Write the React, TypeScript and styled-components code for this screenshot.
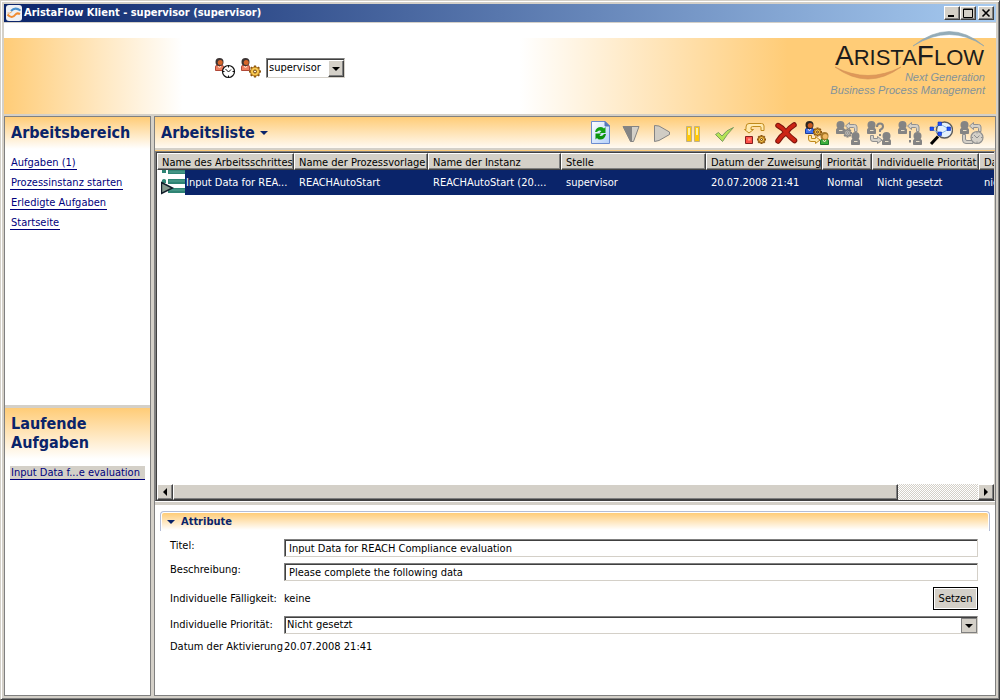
import React from "react";
import styled, { createGlobalStyle, css } from "styled-components";

const face = "#d4d0c8";
const shadow = "#808080";
const dark = "#404040";
const amber = "#ffcc77";
const navy = "#0a246a";
const ui = `"DejaVu Sans Condensed", "DejaVu Sans", sans-serif`;

const GlobalStyle = createGlobalStyle`
  * { box-sizing: border-box; }
  body { margin: 0; background: ${face}; font: 11px/14px ${ui}; color: #000; }
  button, input, select { font: inherit; color: inherit; border-radius: 0; margin: 0; padding: 0; }
  h1, h2, h3, ul { margin: 0; padding: 0; }
  svg { display: block; }
`;

const raised = css`
  background: ${face};
  border: 1px solid;
  border-color: #fff ${dark} ${dark} #fff;
  box-shadow: inset -1px -1px 0 ${shadow};
`;

const sunken = css`
  background: #fff;
  border: 1px solid;
  border-color: ${shadow} ${face} ${face} ${shadow};
  box-shadow: inset 1px 1px 0 ${dark};
`;

/* ---------- window frame ---------- */

const Window = styled.div`
  min-height: 100vh;
  display: flex;
  flex-direction: column;
  background: ${face};
  border: 1px solid;
  border-color: ${face} ${dark} ${dark} ${face};
  box-shadow: inset 1px 1px 0 #fff, inset -1px -1px 0 ${shadow};
  padding: 3px;
`;

const TitleBar = styled.header`
  height: 18px;
  display: flex;
  align-items: center;
  gap: 2px;
  padding: 0 2px;
  background: linear-gradient(90deg, ${navy}, #a6caf0);
`;

const WindowTitle = styled.h1`
  flex: 1;
  font-size: 11px;
  line-height: 18px;
  color: #fff;
`;

const WindowButtons = styled.div`
  display: flex;
`;

const WindowButton = styled.button<{ $apart?: boolean }>`
  ${raised}
  width: 16px;
  height: 14px;
  display: grid;
  place-items: center;
  margin-left: ${(p) => (p.$apart ? 2 : 0)}px;
`;

/* ---------- banner ---------- */

const Banner = styled.div`
  height: 91px;
  margin: 1px 0 2px;
  display: flex;
  align-items: flex-start;
  justify-content: space-between;
  padding: 7px 10px 0 210px;
  background: linear-gradient(90deg, ${amber} 0%, #fff 18%, #fff 52%, ${amber} 79%) no-repeat 0 15px #fff;
`;

const UserTools = styled.div`
  display: flex;
  align-items: center;
  gap: 4px;
  padding-top: 27px;
`;

const FlatButton = styled.button`
  background: none;
  border: 0;
  display: grid;
  place-items: center;
`;

const Picker = styled.div<{ $width?: string }>`
  position: relative;
  width: ${(p) => p.$width ?? "100%"};
`;

const PickerField = styled.select<{ $tall?: boolean }>`
  ${sunken}
  appearance: none;
  display: block;
  width: 100%;
  height: ${(p) => (p.$tall ? 20 : 18)}px;
  padding: 0 18px 0 2px;
  outline: 0;
`;

const PickerArrow = styled.span<{ $flat?: boolean }>`
  ${raised}
  ${(p) => p.$flat && css`border-color: ${shadow}; box-shadow: none;`}
  position: absolute;
  top: 2px;
  right: 1px;
  bottom: 1px;
  width: 16px;
  display: grid;
  place-items: center;
  pointer-events: none;
`;

/* ---------- panels ---------- */

const Workspace = styled.div`
  flex: 1;
  display: grid;
  grid-template-columns: 147px minmax(0, 1fr);
  gap: 3px;
`;

const Sidebar = styled.nav`
  display: flex;
  flex-direction: column;
  gap: 3px;
  border: 1px solid ${shadow};
`;

const SideSection = styled.section`
  flex: 1;
  background: #fff;
`;

const SideHeading = styled.h2`
  font-size: 16px;
  line-height: 19px;
  color: ${navy};
  padding: 6px 6px 7px;
  background: linear-gradient(${amber}, #fff);
`;

const LinkList = styled.ul`
  list-style: none;
  padding: 7px 5px;
`;

const LinkItem = styled.li`
  height: 20px;
`;

const SideLink = styled.a<{ $current?: boolean }>`
  display: ${(p) => (p.$current ? "block" : "inline-block")};
  line-height: 13px;
  height: 14px;
  padding: 0 1px;
  white-space: nowrap;
  color: #00007c;
  background: ${(p) => (p.$current ? face : "none")};
  text-decoration: none;
  border-bottom: 1px solid #00007c;
`;

const Main = styled.main`
  display: flex;
  flex-direction: column;
  min-width: 0;
  border: 1px solid ${shadow};
  background: #fff;
`;

const ListBar = styled.div`
  height: 31px;
  display: flex;
  align-items: center;
  justify-content: space-between;
  padding: 0 11px 0 6px;
  background: linear-gradient(${amber}, #fffaf2);
`;

const ListHeading = styled.h2`
  font-size: 16px;
  line-height: 20px;
  color: ${navy};
`;

const HeadingButton = styled.button`
  background: none;
  border: 0;
  display: flex;
  align-items: center;
  gap: 5px;
  font-weight: bold;
`;

const Toolbar = styled.div`
  display: flex;
  gap: 7px;
`;

/* ---------- work list ---------- */

const ListFrame = styled.div`
  flex: 1;
  display: flex;
  flex-direction: column;
  min-height: 200px;
  border-top: 2px solid ${face};
  box-shadow: inset 0 1px 0 ${amber};
  padding-top: 1px;
`;

const ListView = styled.div`
  flex: 1;
  display: flex;
  flex-direction: column;
  border: 1px solid;
  border-color: ${shadow} ${face} ${dark} ${shadow};
  padding: 1px 0 0 1px;
  background: linear-gradient(${dark}, ${dark}) no-repeat 0 0 / 100% 1px,
    linear-gradient(${dark}, ${dark}) no-repeat 0 0 / 1px 100%;
`;

const TableClip = styled.div`
  flex: 1;
  overflow: hidden;
`;

const Table = styled.table`
  width: 100%;
  min-width: 880px;
  table-layout: fixed;
  border-collapse: separate;
  border-spacing: 0;
`;

const Column = styled.col<{ $w?: number }>`
  width: ${(p) => (p.$w ? `${p.$w}px` : "auto")};
`;

const HeadCell = styled.th`
  ${raised}
  height: 17px;
  padding: 1px 0 0 4px;
  line-height: 13px;
  font-weight: normal;
  text-align: left;
  white-space: nowrap;
  overflow: hidden;
`;

const Cell = styled.td`
  height: 25px;
  padding: 0 0 0 5px;
  background: ${navy};
  color: #fff;
  white-space: nowrap;
  overflow: hidden;
`;

const StepCell = styled(Cell)`
  padding: 0;
`;

const Step = styled.div`
  display: flex;
  align-items: center;
  gap: 1px;
`;

const StepIcon = styled.span`
  background: #fff;
  padding-left: 4px;
`;

const ScrollBar = styled.div`
  display: flex;
  height: 16px;
  background: repeating-conic-gradient(#fff 0 25%, ${face} 0 50%) 0 0 / 2px 2px;
`;

const ScrollButton = styled.button`
  ${raised}
  width: 16px;
  display: grid;
  place-items: center;
`;

const ScrollTrack = styled.div`
  flex: 1;
  display: flex;
`;

const ScrollThumb = styled.div`
  ${raised}
  width: 90%;
`;

const Sash = styled.div`
  height: 4px;
  background: ${face};
  border-top: 1px solid #fff;
`;

/* ---------- attributes ---------- */

const Attributes = styled.section`
  min-height: 190px;
  padding: 6px 5px 0;
`;

const AttributesHeading = styled.h3`
  height: 20px;
  border: 1px solid #b4bdd6;
  border-bottom: 0;
  border-radius: 4px 4px 0 0;
  padding: 1px;
  background: linear-gradient(${amber}, #fff) content-box, #fff;
  font-size: 11px;
`;

const SectionToggle = styled(HeadingButton)`
  width: 100%;
  height: 17px;
  gap: 6px;
  padding-left: 5px;
  color: ${navy};
`;

const Form = styled.form`
  display: grid;
  grid-template-columns: 114px minmax(0, 1fr);
  row-gap: 6px;
  padding: 8px 12px 0 10px;
`;

const Label = styled.label<{ $top?: boolean }>`
  align-self: ${(p) => (p.$top ? "start" : "center")};
  line-height: 14px;
  white-space: nowrap;
`;

const TextField = styled.input`
  ${sunken}
  width: 100%;
  height: 18px;
  padding: 1px 4px 0;
  outline: 0;
`;

const Inline = styled.div`
  display: flex;
  align-items: center;
  justify-content: space-between;
`;

const PushButton = styled.button`
  width: 45px;
  height: 23px;
  background: ${face};
  border: 1px solid #000;
  box-shadow: inset 0 0 0 1px #fff;
`;

/* ---------- glyphs ---------- */

const Down = ({ size = 8, color = "#000" }: { size?: number; color?: string }) => (
  <svg width={size} height={size / 2} viewBox="0 0 8 4" fill={color}>
    <path d="M0 0H8L4 4Z" />
  </svg>
);

const Side = ({ flip = false }: { flip?: boolean }) => (
  <svg width="4" height="8" viewBox="0 0 4 8">
    <path d={flip ? "M4 0V8L0 4Z" : "M0 0V8L4 4Z"} />
  </svg>
);

const Icon = ({ children, w = 24, h = 24 }: { children: React.ReactNode; w?: number; h?: number }) => (
  <svg width={w} height={h} viewBox={`0 0 ${w} ${h}`} fill="none">
    {children}
  </svg>
);

type Tint = { body: string; edge: string; head: string; hair: string };
const orangeUser: Tint = { body: "#f08060", edge: "#b04838", head: "#d8662a", hair: "#3c3434" };
const blueUser: Tint = { body: "#3f74ee", edge: "#1a3c9c", head: "#c85a20", hair: "#2c2420" };
const greenUser: Tint = { body: "#3cae3c", edge: "#1c7a28", head: "#f0b860", hair: "#a87828" };
const greyUser: Tint = { body: "#848484", edge: "#848484", head: "#848484", hair: "#848484" };

const Person = ({ x, y, t }: { x: number; y: number; t: Tint }) => (
  <g transform={`translate(${x} ${y})`}>
    <path d="M0.500 12.500V9Q0.500 7 2.500 7H6.500Q8.500 7 8.500 9V12.500Z" fill={t.body} stroke={t.edge} />
    <circle cx="4.500" cy="4" r="4" fill={t.hair} />
    <circle cx="5.200" cy="4.400" r="2.500" fill={t.head} />
    {t === greyUser && <path d="M3 9.500H6.500" stroke="#e8dcc4" />}
    {t !== greyUser && <path d="M3 8L4.500 10L6 8" stroke="#ffe0d0" />}
  </g>
);

const Gear = ({ x, y, r = 4, grey = false }: { x: number; y: number; r?: number; grey?: boolean }) => (
  <g transform={`translate(${x} ${y})`}>
    {[0, 45, 90, 135].map((a) => (
      <path
        key={a}
        d={`M0 ${-r - 1.5}V${r + 1.5}`}
        transform={`rotate(${a})`}
        stroke={grey ? "#848484" : "#8a5410"}
        strokeWidth="2.200"
      />
    ))}
    <circle r={r} fill={grey ? "#b8b4ac" : "#f8c850"} stroke={grey ? "#848484" : "#a0640c"} />
    <circle r={r / 3} fill={grey ? "#fff" : "#fff2cc"} stroke={grey ? "#848484" : "#6c3c08"} />
  </g>
);

const Clock = ({ x, y, grey = false }: { x: number; y: number; grey?: boolean }) => (
  <g transform={`translate(${x} ${y})`} stroke={grey ? "#909090" : "#101010"}>
    <circle r="6" fill={grey ? "#d4d0c8" : "#fff"} strokeWidth="1.200" />
    <path d="M0 -5.500V-4M0 5.500V4M-5.500 0H-4M5.500 0H4M-3 -2.500L0 0.500L2.500 -2" />
  </g>
);

const BackArrow = ({ grey = false }: { grey?: boolean }) => (
  <g transform={grey ? "translate(9.500 1)" : "translate(1.500 1)"}>
    {grey ? (
      <path d="M0 4L4 0.500V2.500H9Q11.500 2.500 11.500 5V9.500H9V6.500Q9 5.500 8 5.500H4V7.500Z" fill="#d4d0c8" stroke="#909090" />
    ) : (
      <path d="M1.500 7.500V5Q1.500 1.500 4.500 1.500H17Q19.500 1.500 19.500 4V8.500H16.500V5.500Q16.500 4.500 15.500 4.500H8Q6.500 4.500 6.500 6V7.500H9L4.500 11L0 7.500Z" fill="#ffe9ae" stroke="#c08a1c" />
    )}
  </g>
);

const ForwardArrow = ({ grey = false }: { grey?: boolean }) => (
  <path
    d="M6.500 14.500V17.500H10.500V15.500L15 19L10.500 22.500V20.500H6Q3.500 20.500 3.500 18V14.500Z"
    fill={grey ? "#d4d0c8" : "#ffe9ae"}
    stroke={grey ? "#909090" : "#c08a1c"}
  />
);

const tools: { name: string; art: React.ReactNode }[] = [
  {
    name: "Aktualisieren",
    art: (
      <>
        <defs>
          <linearGradient id="page" x1="0" y1="0" x2="1" y2="1">
            <stop offset="0" stopColor="#fff" />
            <stop offset="1" stopColor="#b4d0fa" />
          </linearGradient>
        </defs>
        <path d="M3.500 0.500H17L21.500 5V22.500H3.500Z" fill="url(#page)" stroke="#6c8cd0" />
        <path d="M17 0.500V5H21.500Z" fill="#5878b8" stroke="#5878b8" />
        <path d="M7 11Q8 6 13 6Q15 6 16 7.500L17.500 6V12H11.500L13.500 10Q10.500 8.500 9 11Z" fill="#12a012" />
        <path d="M18 13Q17 18.500 12 18.500Q10 18.500 9 17L7.500 18.500V12.500H13.500L11.500 14.500Q14 16 16 13Z" fill="#0c940c" />
      </>
    ),
  },
  {
    name: "Herunterladen",
    art: (
      <>
        <path d="M4 5.500H20L14.500 20.500H11.500Z" fill="#d4d0c8" stroke="#848484" />
        <path d="M4 5.500H13V20.500H11.500Z" fill="#848484" />
      </>
    ),
  },
  {
    name: "Starten",
    art: <path d="M4.500 4.500L9 5L19.500 11V13.500L9 19.500L4.500 20.500Z" fill="#d0ccc4" stroke="#848484" />,
  },
  {
    name: "Anhalten",
    art: (
      <>
        {[6, 14].map((x) => (
          <g key={x}>
            <path d={`M${x - 0.5} 5.500H${x + 4.5}V20.500H${x - 0.5}Z`} fill="#ffc80a" stroke="#c0b088" />
            <path d={`M${x + 2} 7V14`} stroke="#fff0a0" strokeWidth="2" />
          </g>
        ))}
      </>
    ),
  },
  {
    name: "Beenden",
    art: (
      <path d="M3.500 13.500L6.500 11.500L10 15Q14 9 21.500 6.500Q15 13 10.500 20.500Z" fill="#b4e454" stroke="#7c9c60" strokeLinejoin="round" />
    ),
  },
  {
    name: "Abbrechen",
    art: (
      <>
        <BackArrow />
        <path d="M2.500 15.500H9.500V22.500H2.500Z" fill="#ff5048" stroke="#842020" />
        <path d="M5 17.500H7.500V19.500H5Z" fill="#ff9c90" />
        <Gear x={18.5} y={18.5} r={3} />
      </>
    ),
  },
  {
    name: "Entfernen",
    art: (
      <>
        <path d="M4 4.500Q9 7 12 11.500Q16 16 20.500 19.500M20 4Q15 7 12 11.500Q7 15 4 20" stroke="#7c140c" strokeWidth="5.500" strokeLinecap="round" />
        <path d="M4 4.500Q9 7 12 11.500Q16 16 20.500 19.500M20 4Q15 7 12 11.500Q7 15 4 20" stroke="#cc2414" strokeWidth="3.500" strokeLinecap="round" />
      </>
    ),
  },
  {
    name: "Delegieren",
    art: (
      <>
        <Person x={0} y={0} t={blueUser} />
        <ForwardArrow />
        <Gear x={12.5} y={11} r={3} />
        <Person x={15} y={11} t={greenUser} />
      </>
    ),
  },
  {
    name: "Zurückgeben",
    art: (
      <>
        <Person x={0} y={0} t={greyUser} />
        <BackArrow grey />
        <Gear x={11.5} y={12} r={3} grey />
        <Person x={15} y={11} t={greyUser} />
      </>
    ),
  },
  {
    name: "Anfragen",
    art: (
      <>
        <Person x={0} y={0} t={greyUser} />
        <ForwardArrow grey />
        <path d="M10 6Q10 2.500 13 2.500Q16 2.500 16 5.500Q16 7.500 13 9V11M13 13V15" stroke="#848484" strokeWidth="2" />
        <Person x={15} y={11} t={greyUser} />
      </>
    ),
  },
  {
    name: "Hinweisen",
    art: (
      <>
        <Person x={0} y={0} t={greyUser} />
        <BackArrow grey />
        <path d="M12 10V17M12 19V21.500" stroke="#848484" strokeWidth="2" />
        <Person x={15} y={11} t={greyUser} />
      </>
    ),
  },
  {
    name: "Prozess anzeigen",
    art: (
      <>
        <path d="M2 23L9 15.500" stroke="#000" strokeWidth="3" />
        <circle cx="15.500" cy="9" r="8" fill="#e4f0fa" stroke="#5c5c5c" strokeWidth="1.400" />
        <path d="M11 13L3 8L11 3L20 8L11 13" stroke="#88b8f0" />
        {[[1, 6], [9, 1], [18, 6], [9, 11]].map(([x, y]) => (
          <path key={`${x}-${y}`} d={`M${x} ${y}h3.500v3.500h-3.500z`} fill="#1c50ff" stroke="#0c2cb0" strokeWidth="0.600" />
        ))}
      </>
    ),
  },
  {
    name: "Wiedervorlage",
    art: (
      <>
        <Person x={0} y={0} t={greyUser} />
        <BackArrow grey />
        <path d="M2.500 13.500V19Q2.500 22.500 6 22.500H13V19.500H7Q5.500 19.500 5.500 18V13.500Z" fill="#d4d0c8" stroke="#909090" />
        <Clock x={17} y={16.5} grey />
      </>
    ),
  },
];

const AppIcon = () => (
  <Icon w={16} h={16}>
    <rect width="16" height="16" rx="3" fill="#eef0f4" />
    <path d="M5 6Q9 1.500 14.500 5.500" stroke="#4a90cc" strokeWidth="2" />
    <path d="M1.500 9.500Q6 14.500 9.500 9.500Q11 7.500 14 9" stroke="#f08a30" strokeWidth="2" />
    <path d="M1.500 8Q4 9 6 6.500" stroke="#f0a860" />
  </Icon>
);

const Logo = () => (
  <svg width="160" height="68" viewBox="-8 0 160 68" role="img" aria-label="AristaFlow">
    <path d="M79 16Q116 -13 150 16Q116 -7 79 16Z" fill="#94acb8" stroke="#8ca4b0" strokeWidth="0.600" />
    <path d="M1 37Q34 61 67 37Q34 54 1 37Z" fill="#e09858" stroke="#d09058" strokeWidth="0.600" />
    <text x="1" y="35" fontFamily='"Liberation Sans", Arial, sans-serif' fontSize="22" fill="#1c1c1c">
      <tspan fontSize="28">A</tspan>RISTA<tspan fontSize="28">F</tspan>LOW
    </text>
    <g fontFamily='"Liberation Sans", Arial, sans-serif' fontSize="11" fontStyle="italic" fill="#84939a" textAnchor="end">
      <text x="151" y="51">Next Generation</text>
      <text x="151" y="64">Business Process Management</text>
    </g>
  </svg>
);

const RunningStep = () => (
  <Icon w={24} h={25}>
    <g fill="#2f8474">
      <path d="M1 0h4v3h-4zM7 0h17v4h-17zM1 10q2-2 4 0v3h-4zM7 9h17v5h-17zM7 18h17v5h-17z" />
    </g>
    <path d="M8 2H24M8 11H24M8 20H24" stroke="#58a494" />
    <path d="M0.500 12.500L11.500 18L0.500 23.500Z" fill="#84988c" stroke="#101c28" strokeWidth="1.400" />
  </Icon>
);

/* ---------- data ---------- */

const columns: { title: string; width?: number }[] = [
  { title: "Name des Arbeitsschrittes", width: 137 },
  { title: "Name der Prozessvorlage", width: 134 },
  { title: "Name der Instanz", width: 133 },
  { title: "Stelle", width: 145 },
  { title: "Datum der Zuweisung", width: 116 },
  { title: "Priorität", width: 50 },
  { title: "Individuelle Priorität", width: 107 },
  { title: "Datum" },
];

const task = ["REACHAutoStart", "REACHAutoStart (20....", "supervisor", "20.07.2008 21:41", "Normal", "Nicht gesetzt", "nicht"];

export default function App() {
  return (
    <Window>
      <GlobalStyle />
      <TitleBar>
        <AppIcon />
        <WindowTitle>AristaFlow Klient - supervisor (supervisor)</WindowTitle>
        <WindowButtons>
          <WindowButton aria-label="Minimieren">
            <Icon w={10} h={10}><path d="M1 8H7" stroke="#000" strokeWidth="2" /></Icon>
          </WindowButton>
          <WindowButton aria-label="Maximieren">
            <Icon w={10} h={10}><path d="M0.500 1H9.500V9.500H0.500ZM0.500 1.500H9.500" stroke="#000" /></Icon>
          </WindowButton>
          <WindowButton aria-label="Schließen" $apart>
            <Icon w={10} h={10}><path d="M1.500 1.500L8.500 8.500M8.500 1.500L1.500 8.500" stroke="#000" strokeWidth="1.600" /></Icon>
          </WindowButton>
        </WindowButtons>
      </TitleBar>

      <Banner>
        <UserTools>
          <FlatButton aria-label="Abwesenheit">
            <Icon w={22} h={22}>
              <Person x={1} y={1} t={orangeUser} />
              <Clock x={14.5} y={14.5} />
            </Icon>
          </FlatButton>
          <FlatButton aria-label="Einstellungen">
            <Icon w={22} h={22}>
              <Person x={1} y={1} t={orangeUser} />
              <Gear x={15} y={14.5} r={4.5} />
            </Icon>
          </FlatButton>
          <Picker $width="79px">
            <PickerField $tall aria-label="Benutzer" defaultValue="supervisor">
              <option>supervisor</option>
            </PickerField>
            <PickerArrow><Down /></PickerArrow>
          </Picker>
        </UserTools>
        <Logo />
      </Banner>

      <Workspace>
        <Sidebar>
          <SideSection>
            <SideHeading>Arbeitsbereich</SideHeading>
            <LinkList>
              {["Aufgaben (1)", "Prozessinstanz starten", "Erledigte Aufgaben", "Startseite"].map((t) => (
                <LinkItem key={t}><SideLink href="#">{t}</SideLink></LinkItem>
              ))}
            </LinkList>
          </SideSection>
          <SideSection>
            <SideHeading>Laufende Aufgaben</SideHeading>
            <LinkList>
              <LinkItem><SideLink href="#" $current>Input Data f...e evaluation</SideLink></LinkItem>
            </LinkList>
          </SideSection>
        </Sidebar>

        <Main>
          <ListBar>
            <ListHeading>
              <HeadingButton>Arbeitsliste <Down color={navy} /></HeadingButton>
            </ListHeading>
            <Toolbar>
              {tools.map((t) => (
                <FlatButton key={t.name} aria-label={t.name}><Icon>{t.art}</Icon></FlatButton>
              ))}
            </Toolbar>
          </ListBar>

          <ListFrame>
            <ListView>
              <TableClip>
                <Table>
                  <colgroup>
                    {columns.map((c) => <Column key={c.title} $w={c.width} />)}
                  </colgroup>
                  <thead>
                    <tr>{columns.map((c) => <HeadCell key={c.title}>{c.title}</HeadCell>)}</tr>
                  </thead>
                  <tbody>
                    <tr>
                      <StepCell>
                        <Step>
                          <StepIcon><RunningStep /></StepIcon>
                          Input Data for REA...
                        </Step>
                      </StepCell>
                      {task.map((v, i) => <Cell key={i}>{v}</Cell>)}
                    </tr>
                  </tbody>
                </Table>
              </TableClip>
              <ScrollBar>
                <ScrollButton aria-label="Nach links"><Side flip /></ScrollButton>
                <ScrollTrack><ScrollThumb /></ScrollTrack>
                <ScrollButton aria-label="Nach rechts"><Side /></ScrollButton>
              </ScrollBar>
            </ListView>
          </ListFrame>

          <Sash />

          <Attributes>
            <AttributesHeading>
              <SectionToggle><Down color={navy} />Attribute</SectionToggle>
            </AttributesHeading>
            <Form onSubmit={(e) => e.preventDefault()}>
              <Label htmlFor="title" $top>Titel:</Label>
              <TextField id="title" defaultValue="Input Data for REACH Compliance evaluation" />
              <Label htmlFor="description" $top>Beschreibung:</Label>
              <TextField id="description" defaultValue="Please complete the following data" />
              <Label htmlFor="due">Individuelle Fälligkeit:</Label>
              <Inline>
                <output id="due">keine</output>
                <PushButton type="button">Setzen</PushButton>
              </Inline>
              <Label htmlFor="priority">Individuelle Priorität:</Label>
              <Picker>
                <PickerField id="priority" defaultValue="Nicht gesetzt">
                  <option>Nicht gesetzt</option>
                </PickerField>
                <PickerArrow $flat><Down /></PickerArrow>
              </Picker>
              <Label htmlFor="activated">Datum der Aktivierung</Label>
              <output id="activated">20.07.2008 21:41</output>
            </Form>
          </Attributes>
        </Main>
      </Workspace>
    </Window>
  );
}
